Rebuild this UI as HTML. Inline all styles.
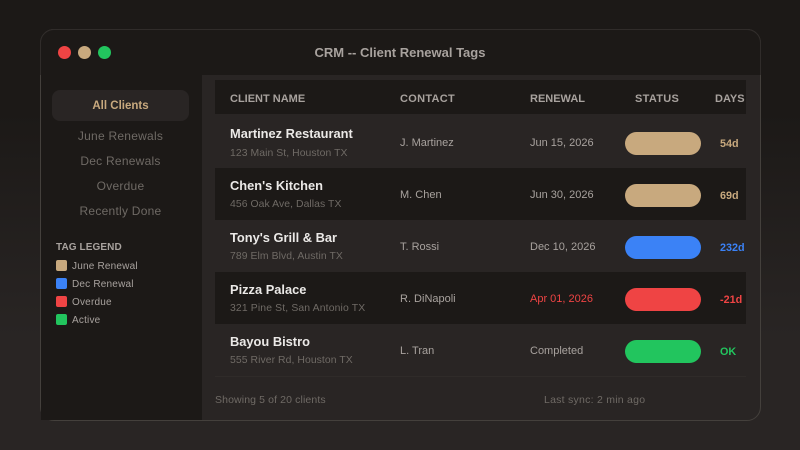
<!DOCTYPE html>
<html><head><meta charset="utf-8"><style>
*{margin:0;padding:0;box-sizing:border-box}
html,body{width:800px;height:450px;overflow:hidden}
body{position:relative;background:linear-gradient(180deg,#1c1917 0%,#1c1917 25%,#292524 75%);font-family:"Liberation Sans",sans-serif}
.a{position:absolute;white-space:nowrap;line-height:14px}
#win{position:absolute;left:40px;top:29px;width:721px;height:392px;border-radius:14px;overflow:hidden;background:#292524;border:1.5px solid #44403c}
#tb{position:absolute;left:40px;top:29px;width:721px;height:46px;overflow:hidden}
#tb div{width:721px;height:392px;border-radius:14px;background:#1c1917;border:1.5px solid #302c2a}
#side{position:absolute;left:41px;top:75px;width:161px;height:344.5px;background:#1c1917}
.row{position:absolute;left:215px;width:531px}
.nm{font-size:12.85px;font-weight:700;color:#ebe9e7;left:230px}
.ad{font-size:10.4px;color:#6f6a65;left:230px;letter-spacing:.07px}
.ct{font-size:11px;color:#a8a29e;left:400px}
.rn{font-size:11px;color:#a8a29e;left:530px}
.pill{position:absolute;left:625px;width:76px;height:23px;border-radius:12px}
.dy{font-size:10.8px;font-weight:700;left:720px}
.h{font-size:11px;font-weight:700;color:#a8a29e;top:92px}
.nav{font-size:12px;color:#6f6a65;left:52px;width:137px;text-align:center;letter-spacing:.25px}
.sw{position:absolute;left:56px;width:10.5px;height:10.5px;border-radius:2px}
.lg{font-size:10px;color:#a8a29e;left:72px;letter-spacing:.2px}
</style></head><body>
<div id="win"></div>
<div id="tb"><div></div></div>
<div id="side"></div>
<div style="position:absolute;left:58px;top:46px;width:13px;height:13px;border-radius:50%;background:#ef4444"></div>
<div style="position:absolute;left:78px;top:46px;width:13px;height:13px;border-radius:50%;background:#c8a97e"></div>
<div style="position:absolute;left:98px;top:46px;width:13px;height:13px;border-radius:50%;background:#22c55e"></div>
<div class="a" style="left:200px;width:400px;top:46px;text-align:center;font-size:13px;font-weight:700;color:#a8a29e">CRM -- Client Renewal Tags</div>

<div style="position:absolute;left:52px;top:90px;width:137px;height:31px;border-radius:8px;background:#292524"></div>
<div class="a nav" style="top:99px;color:#c8a97e;font-weight:700;font-size:11.5px;letter-spacing:0">All Clients</div>
<div class="a nav" style="top:129px">June Renewals</div>
<div class="a nav" style="top:154px">Dec Renewals</div>
<div class="a nav" style="top:179px">Overdue</div>
<div class="a nav" style="top:204px">Recently Done</div>
<div class="a" style="left:56px;top:241px;font-size:10px;font-weight:700;color:#a8a29e;letter-spacing:.1px">TAG LEGEND</div>
<div class="sw" style="top:260px;background:#c8a97e"></div><div class="a lg" style="top:260px">June Renewal</div>
<div class="sw" style="top:278px;background:#3b82f6"></div><div class="a lg" style="top:278px">Dec Renewal</div>
<div class="sw" style="top:296px;background:#ef4444"></div><div class="a lg" style="top:296px">Overdue</div>
<div class="sw" style="top:314px;background:#22c55e"></div><div class="a lg" style="top:314px">Active</div>

<div class="row" style="top:80px;height:34px;background:#1c1917"></div>
<div class="row" style="top:168px;height:52px;background:#1c1917"></div>
<div class="row" style="top:272px;height:52px;background:#1c1917"></div>
<div class="row" style="top:376px;height:1px;background:#2f2b29"></div>
<div class="a h" style="left:230px">CLIENT NAME</div>
<div class="a h" style="left:400px;letter-spacing:.3px">CONTACT</div>
<div class="a h" style="left:530px">RENEWAL</div>
<div class="a h" style="left:635px;letter-spacing:.3px">STATUS</div>
<div class="a h" style="left:715px">DAYS</div>

<div class="a nm" style="top:127px">Martinez Restaurant</div>
<div class="a ad" style="top:147px">123 Main St, Houston TX</div>
<div class="a ct" style="top:136px">J. Martinez</div>
<div class="a rn" style="top:136px">Jun 15, 2026</div>
<div class="pill" style="top:132px;background:#c8a97e"></div>
<div class="a dy" style="top:137px;color:#c8a97e">54d</div>

<div class="a nm" style="top:179px">Chen's Kitchen</div>
<div class="a ad" style="top:198px">456 Oak Ave, Dallas TX</div>
<div class="a ct" style="top:188px">M. Chen</div>
<div class="a rn" style="top:188px">Jun 30, 2026</div>
<div class="pill" style="top:184px;background:#c8a97e"></div>
<div class="a dy" style="top:189px;color:#c8a97e">69d</div>

<div class="a nm" style="top:231px">Tony's Grill &amp; Bar</div>
<div class="a ad" style="top:250px">789 Elm Blvd, Austin TX</div>
<div class="a ct" style="top:240px">T. Rossi</div>
<div class="a rn" style="top:240px">Dec 10, 2026</div>
<div class="pill" style="top:236px;background:#3b82f6"></div>
<div class="a dy" style="top:241px;color:#3b82f6">232d</div>

<div class="a nm" style="top:283px">Pizza Palace</div>
<div class="a ad" style="top:302px;letter-spacing:.14px">321 Pine St, San Antonio TX</div>
<div class="a ct" style="top:292px">R. DiNapoli</div>
<div class="a rn" style="top:292px;color:#ef4444">Apr 01, 2026</div>
<div class="pill" style="top:288px;background:#ef4444"></div>
<div class="a dy" style="top:293px;color:#ef4444">-21d</div>

<div class="a nm" style="top:335px">Bayou Bistro</div>
<div class="a ad" style="top:354px">555 River Rd, Houston TX</div>
<div class="a ct" style="top:344px">L. Tran</div>
<div class="a rn" style="top:344px">Completed</div>
<div class="pill" style="top:340px;background:#22c55e"></div>
<div class="a dy" style="top:345px;color:#22c55e">OK</div>

<div class="a" style="left:215px;top:393px;font-size:10.5px;color:#6f6a65;letter-spacing:.12px">Showing 5 of 20 clients</div>
<div class="a" style="left:544px;top:393px;font-size:10.5px;color:#6f6a65;letter-spacing:.25px">Last sync: 2 min ago</div>
</body></html>
